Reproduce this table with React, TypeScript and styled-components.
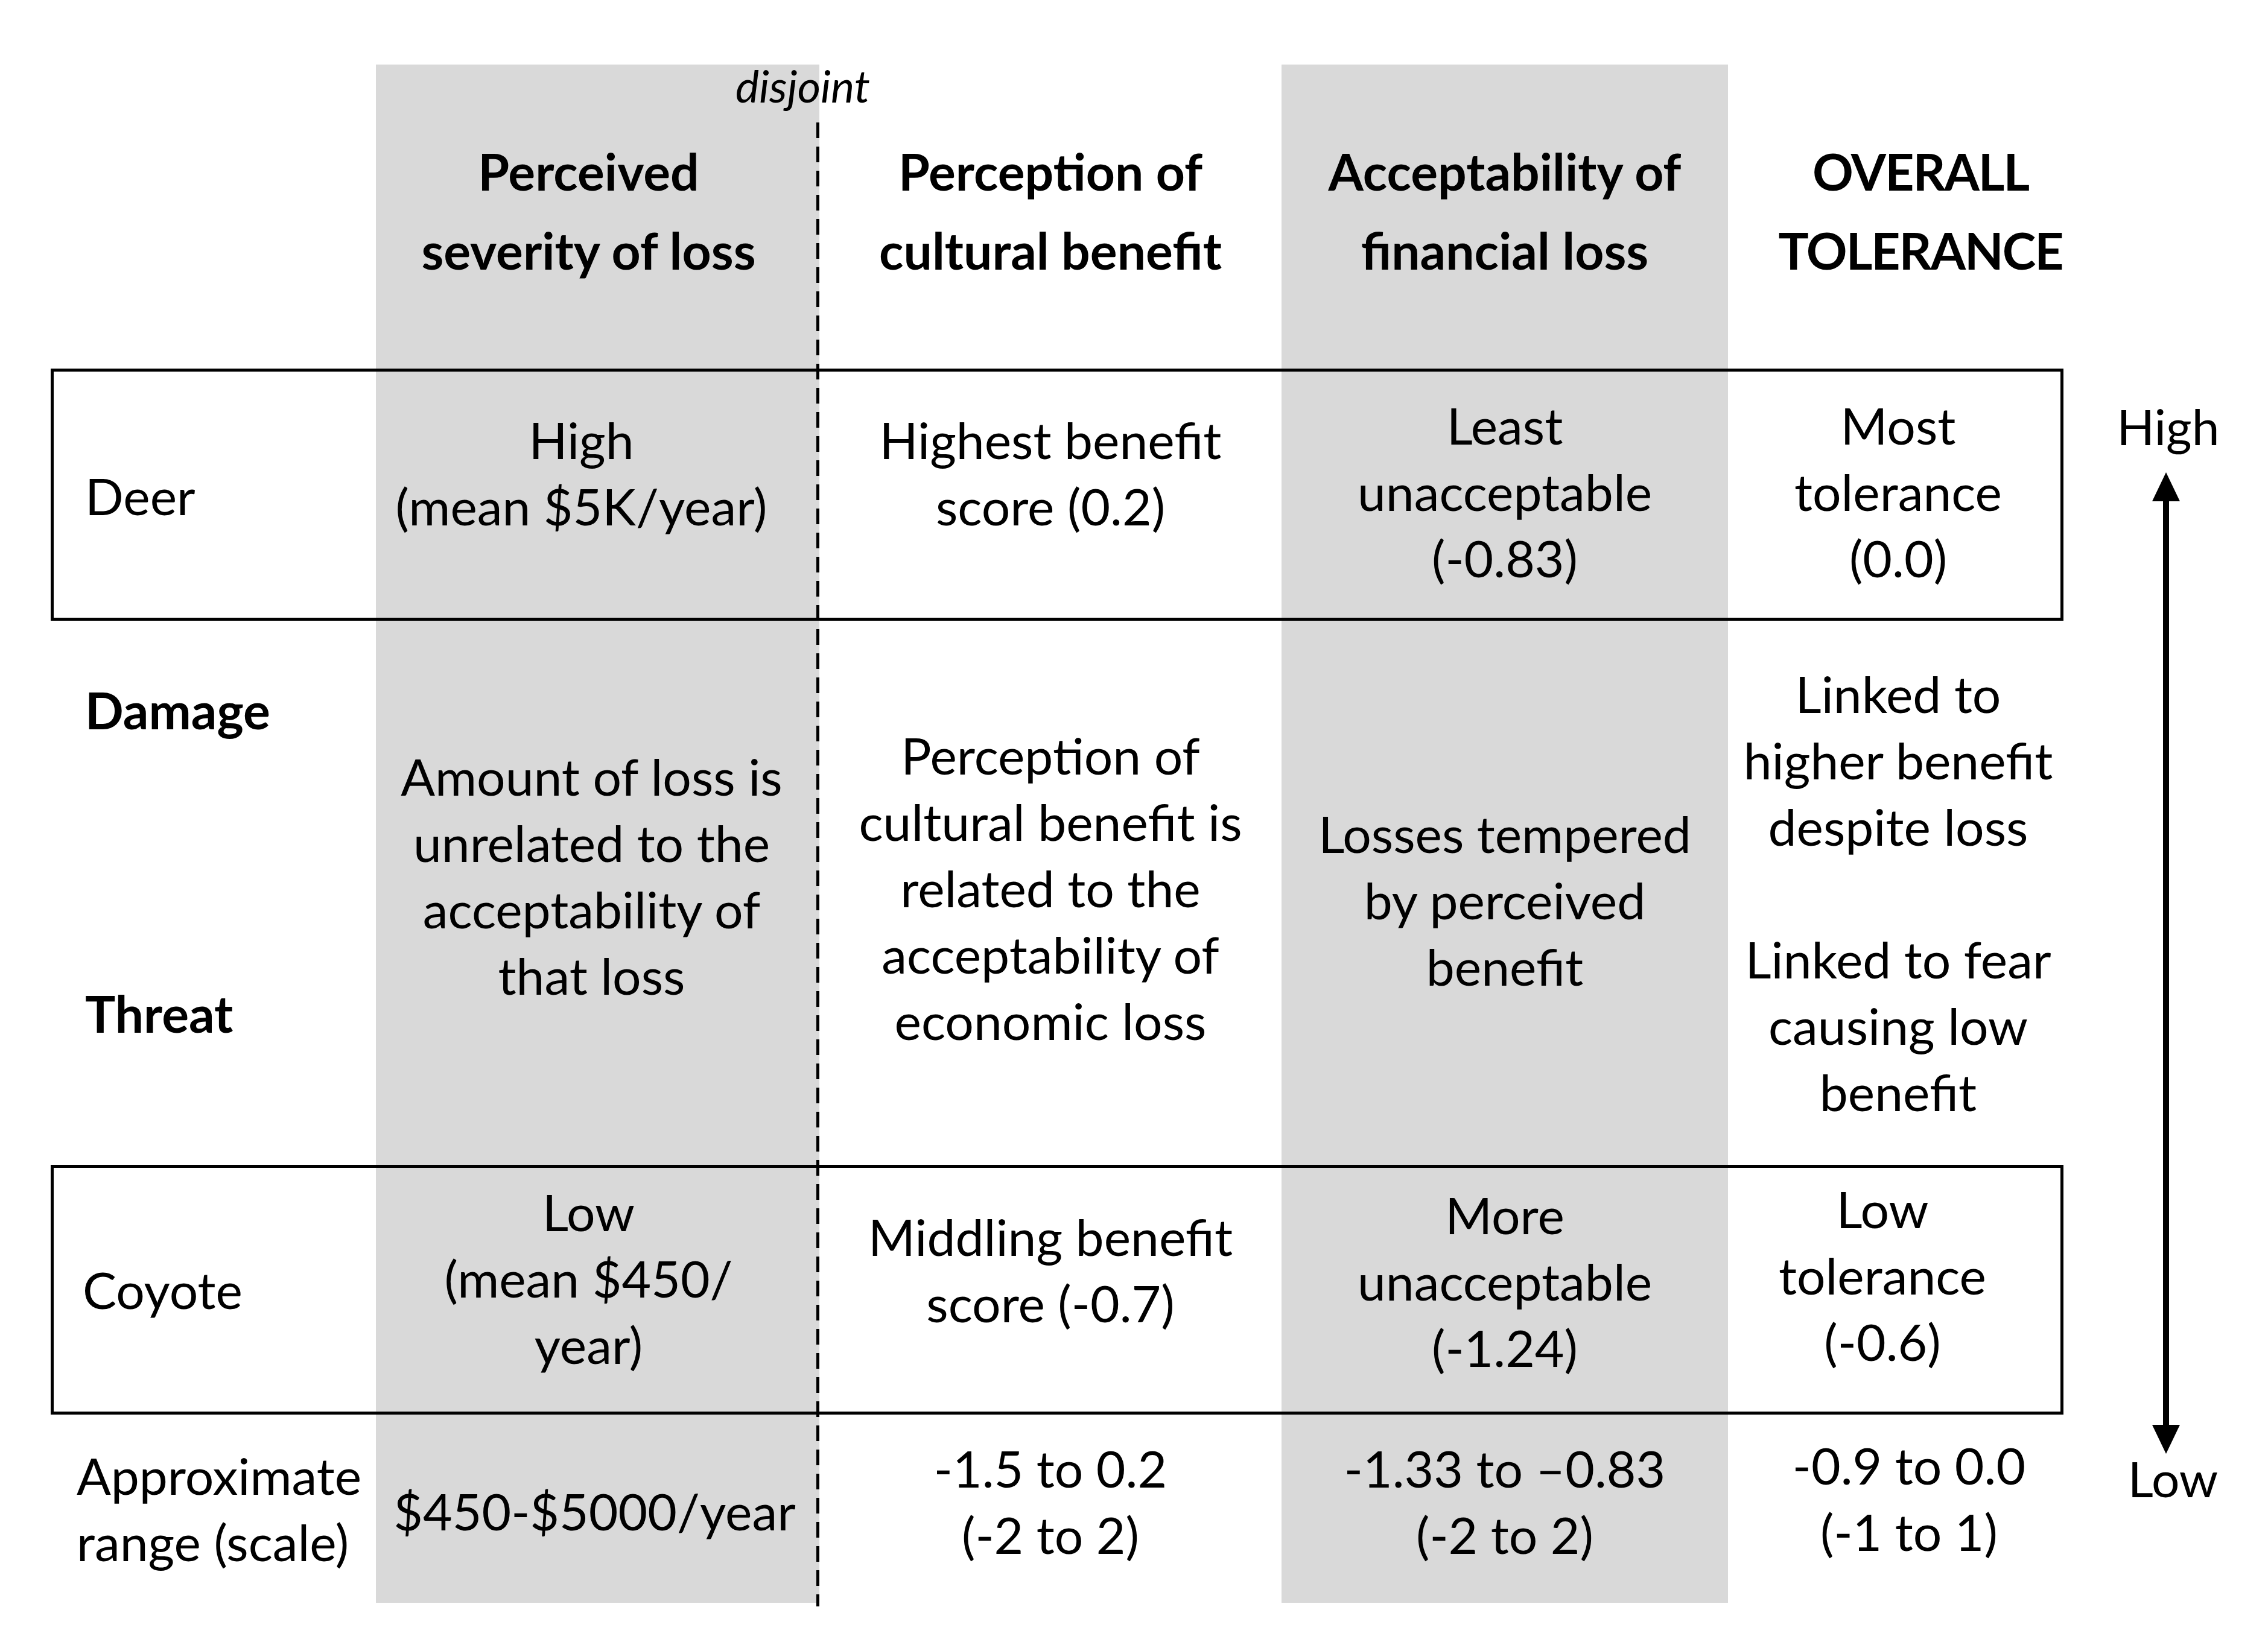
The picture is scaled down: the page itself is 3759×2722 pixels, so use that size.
import React from "react";
import styled, { createGlobalStyle, css } from "styled-components";

const GlobalStyle = createGlobalStyle`
  html, body { margin: 0; padding: 0; background: #ffffff; }
  body { font-family: Lato, "Open Sans", sans-serif; color: #000; }
`;

const Page = styled.div`
  width: 3759px;
  height: 2722px;
  box-sizing: border-box;
  padding: 107px 0 0 84px;
  display: flex;
  align-items: flex-start;
  font-family: Lato, "Open Sans", sans-serif;
  color: #000;
`;

const Table = styled.div`
  position: relative;
  width: 3336px;
  display: flex;
  flex-direction: column;
`;

const Row = styled.div<{ $h: number; $boxed?: boolean }>`
  display: grid;
  grid-template-columns: 539px 735px 766px 740px 556px;
  height: ${(p) => p.$h}px;
  ${(p) =>
    p.$boxed &&
    css`
      outline: 5px solid #000;
      outline-offset: -5px;
    `}
`;

const Cell = styled.div<{
  $shade?: boolean;
  $raise?: number;
  $padR?: number;
  $padL?: number;
  $track?: number;
}>`
  box-sizing: border-box;
  display: flex;
  flex-direction: column;
  justify-content: center;
  align-items: center;
  text-align: center;
  white-space: nowrap;
  font-size: 84px;
  line-height: 110px;
  letter-spacing: ${(p) => p.$track ?? 0}px;
  background: ${(p) => (p.$shade ? "#d9d9d9" : "transparent")};
  padding-bottom: ${(p) => Math.max(0, (p.$raise ?? 0) * 2)}px;
  padding-top: ${(p) => Math.max(0, -(p.$raise ?? 0) * 2)}px;
  padding-right: ${(p) => p.$padR ?? 0}px;
  padding-left: ${(p) => p.$padL ?? 0}px;
`;

const HeadCell = styled(Cell)`
  font-weight: 700;
  line-height: 131px;
`;

const LabelCell = styled(Cell)<{ $indent?: number }>`
  align-items: flex-start;
  text-align: left;
  padding-left: ${(p) => p.$indent ?? 57}px;
`;

const SplitLabel = styled.div<{ $top: number; $bottom: number }>`
  box-sizing: border-box;
  display: flex;
  flex-direction: column;
  justify-content: space-between;
  padding: ${(p) => p.$top}px 0 ${(p) => p.$bottom}px 57px;
  font-size: 84px;
  line-height: 110px;
  font-weight: 700;
  white-space: nowrap;
`;

const Line = styled.span`
  display: block;
  min-height: 1em;
`;

const Marker = styled.div`
  position: absolute;
  top: 0;
  bottom: -6px;
  left: 1269px;
  width: 5px;
  display: flex;
  flex-direction: column;
  align-items: center;
  pointer-events: none;
`;

const MarkerLabel = styled.span`
  font-style: italic;
  font-size: 74px;
  line-height: 70px;
  height: 96px;
  white-space: nowrap;
  transform: translateX(-25px);
`;

const DashLine = styled.div`
  flex: 1;
  width: 5px;
  background: repeating-linear-gradient(
    to bottom,
    #000 0px,
    #000 26px,
    transparent 26px,
    transparent 40px
  );
`;

const ScaleColumn = styled.div`
  width: 339px;
  display: flex;
  flex-direction: column;
  align-items: center;
  padding-top: 544px;
  font-size: 82px;
  line-height: 110px;
`;

const ScaleLabel = styled.span<{ $dx?: number }>`
  display: block;
  transform: translateX(${(p) => p.$dx ?? 0}px);
`;

const ArrowSvg = styled.svg`
  display: block;
  margin-top: 22px;
  margin-bottom: -15px;
`;

const L = ({ lines }: { lines: string[] }) => (
  <>
    {lines.map((t, i) => (
      <Line key={i}>{t || "\u00a0"}</Line>
    ))}
  </>
);

export default function App() {
  return (
    <>
      <GlobalStyle />
      <Page>
        <Table>
          <Row $h={504}>
            <Cell />
            <HeadCell $shade $raise={10} $padR={30}>
              <L lines={["Perceived", "severity of loss"]} />
            </HeadCell>
            <HeadCell $raise={10}>
              <L lines={["Perception of", "cultural benefit"]} />
            </HeadCell>
            <HeadCell $shade $raise={10}>
              <L lines={["Acceptability of", "financial loss"]} />
            </HeadCell>
            <HeadCell $raise={10} $padL={82} $track={-2}>
              <L lines={["OVERALL", "TOLERANCE"]} />
            </HeadCell>
          </Row>

          <Row $h={418} $boxed>
            <LabelCell $raise={-2}>Deer</LabelCell>
            <Cell $shade $raise={36} $padR={54}>
              <L lines={["High", "(mean $5K/year)"]} />
            </Cell>
            <Cell $raise={36}>
              <L lines={["Highest benefit", "score (0.2)"]} />
            </Cell>
            <Cell $shade $raise={5}>
              <L lines={["Least", "unacceptable", "(-0.83)"]} />
            </Cell>
            <Cell $raise={5} $padL={8}>
              <L lines={["Most", "tolerance", "(0.0)"]} />
            </Cell>
          </Row>

          <Row $h={902}>
            <SplitLabel $top={93} $bottom={196}>
              <span>Damage</span>
              <span>Threat</span>
            </SplitLabel>
            <Cell $shade $raise={28} $padR={20}>
              <L lines={["Amount of loss is", "unrelated to the", "acceptability of", "that loss"]} />
            </Cell>
            <Cell $raise={8}>
              <L
                lines={[
                  "Perception of",
                  "cultural benefit is",
                  "related to the",
                  "acceptability of",
                  "economic loss",
                ]}
              />
            </Cell>
            <Cell $shade $raise={-12}>
              <L lines={["Losses tempered", "by perceived", "benefit"]} />
            </Cell>
            <Cell $padL={8}>
              <L
                lines={[
                  "Linked to",
                  "higher benefit",
                  "despite loss",
                  "",
                  "Linked to fear",
                  "causing low",
                  "benefit",
                ]}
              />
            </Cell>
          </Row>

          <Row $h={414} $boxed>
            <LabelCell $indent={53}>Coyote</LabelCell>
            <Cell $shade $raise={19} $padR={30}>
              <L lines={["Low", "(mean $450/", "year)"]} />
            </Cell>
            <Cell $raise={33}>
              <L lines={["Middling benefit", "score (-0.7)"]} />
            </Cell>
            <Cell $shade $raise={14}>
              <L lines={["More", "unacceptable", "(-1.24)"]} />
            </Cell>
            <Cell $raise={24} $padR={44}>
              <L lines={["Low", "tolerance", "(-0.6)"]} />
            </Cell>
          </Row>

          <Row $h={312}>
            <LabelCell $indent={43}>
              <L lines={["Approximate", "range (scale)"]} />
            </LabelCell>
            <Cell $shade $raise={-4} $padR={10}>
              <L lines={["$450-$5000/year"]} />
            </Cell>
            <Cell $raise={12}>
              <L lines={["-1.5 to 0.2", "(-2 to 2)"]} />
            </Cell>
            <Cell $shade $raise={12}>
              <L lines={["-1.33 to \u20130.83", "(-2 to 2)"]} />
            </Cell>
            <Cell $raise={17} $padL={44}>
              <L lines={["-0.9 to 0.0", "(-1 to 1)"]} />
            </Cell>
          </Row>

          <Marker>
            <MarkerLabel>disjoint</MarkerLabel>
            <DashLine />
          </Marker>
        </Table>

        <ScaleColumn>
          <ScaleLabel $dx={4}>High</ScaleLabel>
          <ArrowSvg width="50" height="1627" viewBox="0 0 50 1627">
            <rect x="20" y="44" width="10" height="1539" fill="#000" />
            <polygon points="25,0 2,48 48,48" fill="#000" />
            <polygon points="2,1579 48,1579 25,1627" fill="#000" />
          </ArrowSvg>
          <ScaleLabel $dx={12}>Low</ScaleLabel>
        </ScaleColumn>
      </Page>
    </>
  );
}
